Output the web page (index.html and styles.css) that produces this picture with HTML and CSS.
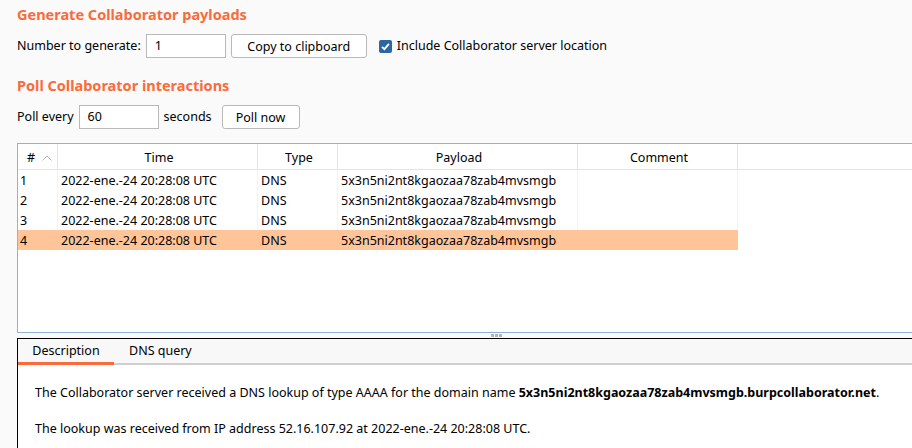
FILE: index.html
```html
<!DOCTYPE html>
<html>
<head>
<meta charset="utf-8">
<link rel="stylesheet" href="styles.css">
</head>
<body>
<div class="top">
  <h2 class="title t1">Generate Collaborator payloads</h2>
  <div class="row r1">
    <span class="lbl">Number to generate:</span>
    <span class="input w80">1</span>
    <span class="btn b-copy">Copy to clipboard</span>
    <span class="check"><svg width="13" height="13" viewBox="0 0 13 13"><rect x="0" y="0" width="13" height="13" rx="2" fill="#2a67a3"/><path d="M3 6.8 L5.4 9.2 L10 3.8" stroke="#fff" stroke-width="1.8" fill="none"/></svg></span>
    <span class="lbl">Include Collaborator server location</span>
  </div>
  <h2 class="title t2">Poll Collaborator interactions</h2>
  <div class="row r2">
    <span class="lbl">Poll every</span>
    <span class="input w80">60</span>
    <span class="lbl sec">seconds</span>
    <span class="btn b-poll">Poll now</span>
  </div>
</div>
<div class="table">
  <div class="thead">
    <div class="c c1 hnum"># <svg width="10" height="6" viewBox="0 0 10 6"><path d="M0.5 5.5 L5 1 L9.5 5.5" stroke="#b8b8b8" fill="none"/></svg></div>
    <div class="c c2">Time</div>
    <div class="c c3">Type</div>
    <div class="c c4">Payload</div>
    <div class="c c5">Comment</div>
    <div class="c c6"></div>
  </div>
  <div class="tbody">
    <div class="tr"><div class="c c1">1</div><div class="c c2">2022-ene.-24 20:28:08 UTC</div><div class="c c3">DNS</div><div class="c c4">5x3n5ni2nt8kgaozaa78zab4mvsmgb</div><div class="c c5"></div></div>
    <div class="tr"><div class="c c1">2</div><div class="c c2">2022-ene.-24 20:28:08 UTC</div><div class="c c3">DNS</div><div class="c c4">5x3n5ni2nt8kgaozaa78zab4mvsmgb</div><div class="c c5"></div></div>
    <div class="tr"><div class="c c1">3</div><div class="c c2">2022-ene.-24 20:28:08 UTC</div><div class="c c3">DNS</div><div class="c c4">5x3n5ni2nt8kgaozaa78zab4mvsmgb</div><div class="c c5"></div></div>
    <div class="tr sel"><div class="c c1">4</div><div class="c c2">2022-ene.-24 20:28:08 UTC</div><div class="c c3">DNS</div><div class="c c4">5x3n5ni2nt8kgaozaa78zab4mvsmgb</div><div class="c c5"></div></div>
  </div>
</div>
<div class="splitter"><span class="dot"></span><span class="dot"></span><span class="dot"></span></div>
<div class="panel">
  <div class="tabs">
    <span class="tab active">Description</span>
    <span class="tab">DNS query</span>
  </div>
  <div class="content">
    <p>The Collaborator server received a DNS lookup of type AAAA for the domain name <b>5x3n5ni2nt8kgaozaa78zab4mvsmgb.burpcollaborator.net</b>.</p>
    <p>The lookup was received from IP address 52.16.107.92 at 2022-ene.-24 20:28:08 UTC.</p>
  </div>
</div>
</body>
</html>
```
FILE: styles.css
```css
* { box-sizing: border-box; }
html, body { margin: 0; padding: 0; }
body {
  width: 912px;
  height: 448px;
  overflow: hidden;
  background: #fafafa;
  font-family: "Noto Sans", "Open Sans", sans-serif;
  font-size: 12.5px;
  color: #000;
}
.top { padding-left: 17px; }
.title {
  margin: 0;
  height: 20px;
  line-height: 20px;
  font-size: 14.5px;
  font-weight: bold;
  color: #fa6a3a;
}
.t1 { margin-top: 4px; }
.t2 { margin-top: 17px; }
.row {
  display: flex;
  align-items: center;
  height: 24px;
}
.r1 { margin-top: 10px; }
.r2 { margin-top: 10px; }
.lbl { white-space: nowrap; line-height: 24px; }
.input {
  display: inline-block;
  height: 24px;
  line-height: 22px;
  border: 1px solid #b9b9b9;
  background: #fff;
  padding-left: 8px;
  margin-left: 5px;
}
.w80 { width: 80px; }
.btn {
  display: inline-flex;
  align-items: center;
  justify-content: center;
  height: 24px;
  border: 1px solid #b9b9b9;
  border-radius: 3px;
  background: #fff;
}
.b-copy { width: 136px; margin-left: 5px; }
.check { margin-left: 12px; margin-right: 5px; display: inline-flex; }
.sec { margin-left: 5px; }
.b-poll { width: 78px; margin-left: 10px; }

.table {
  margin-top: 14px;
  margin-left: 17px;
  height: 190px;
  border: 1px solid #8fb2dd;
  border-right: none;
  background: #fff;
  overflow: hidden;
}
.thead {
  display: flex;
  height: 26px;
  border-bottom: 1px solid #e4e4e4;
}
.thead .c {
  height: 25px;
  line-height: 28px;
  text-align: center;
  border-right: 1px solid #e4e4e4;
}
.thead .hnum { text-align: left; padding-left: 9px; }
.hnum svg { margin-left: 4px; vertical-align: 1px; }
.c { flex: none; white-space: nowrap; padding-left: 3px; }
.c1 { width: 40px; padding-left: 2px; }
.c2 { width: 200px; }
.c3 { width: 80px; }
.c4 { width: 240px; }
.c5 { width: 160px; }
.c6 { flex: 1; border-right: none !important; }
.tr { display: flex; height: 20px; width: 720px; }
.tr .c { height: 20px; line-height: 22px; border-right: 1px solid #f3f3f3; }
.tr.sel { background: #ffc599; }
.tr.sel .c { border-right-color: transparent; }

.splitter {
  height: 5px;
  display: flex;
  justify-content: center;
  gap: 1px;
  padding-left: 80px;
  padding-top: 1px;
}
.dot { width: 3px; height: 3px; background: #b5b5b5; }

.panel {
  margin-left: 17px;
  height: 110px;
  border-top: 1px solid #000;
  border-left: 1px solid #000;
  background: #fff;
}
.tabs {
  display: flex;
  height: 26px;
  background: #f8f8f8;
  border-bottom: 2px solid #cfcfcf;
}
.tab {
  height: 26px;
  line-height: 24px;
  padding: 0 15px;
}
.active {
  width: 96px;
  text-align: center;
  padding: 0;
  border-bottom: 3px solid #fa6a3a;
}
.tab:not(.active) { padding-left: 15px; }
.content { padding-left: 17px; padding-top: 18px; }
.content p { margin: 0 0 17px 0; line-height: 19px; }
.content b { font-weight: bold; }
```
